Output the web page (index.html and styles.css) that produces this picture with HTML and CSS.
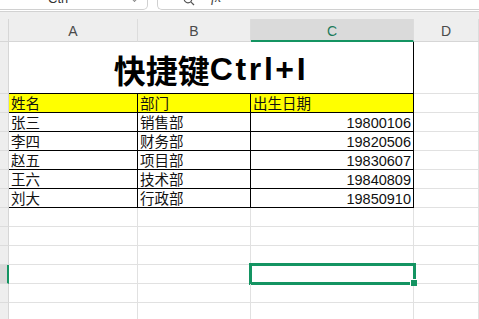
FILE: index.html
```html
<!doctype html>
<html lang="zh-CN">
  <head>
    <meta charset="UTF-8" />
    <meta name="viewport" content="width=device-width, initial-scale=1.0" />
    <title>快捷键Ctrl+I</title>
    <link rel="stylesheet" href="styles.css">
  </head>
  <body>
    <div class="topbar">
      <div class="namebox">
        <span class="name">Ctrl</span>
        <span class="caret"></span>
      </div>
      <div class="formulabox">
        <svg class="search" width="12" height="12" viewBox="0 0 12 12">
          <circle cx="5" cy="5" r="3.8" fill="none" stroke="#555" stroke-width="1.2" />
          <path d="M7.8 7.8 L11 11" stroke="#555" stroke-width="1.2" />
        </svg>
        <span class="fx">fx</span>
      </div>
    </div>
    <div class="band"></div>

    <div class="sheet">
      <!-- column headers -->
      <div class="corner"></div>
      <div class="colhead">A</div>
      <div class="colhead">B</div>
      <div class="colhead active">C</div>
      <div class="colhead">D</div>

      <!-- title row, A:C merged -->
      <div class="rowhead"></div>
      <div class="title">快捷键<span class="latin">Ctrl+I</span></div>
      <div class="cell"></div>

      <div class="rowhead"></div>
      <div class="cell b yellow">姓名</div>
      <div class="cell b yellow">部门</div>
      <div class="cell b yellow">出生日期</div>
      <div class="cell"></div>

      <div class="rowhead"></div>
      <div class="cell b">张三</div>
      <div class="cell b">销售部</div>
      <div class="cell b num">19800106</div>
      <div class="cell"></div>

      <div class="rowhead"></div>
      <div class="cell b">李四</div>
      <div class="cell b">财务部</div>
      <div class="cell b num">19820506</div>
      <div class="cell"></div>

      <div class="rowhead"></div>
      <div class="cell b">赵五</div>
      <div class="cell b">项目部</div>
      <div class="cell b num">19830607</div>
      <div class="cell"></div>

      <div class="rowhead"></div>
      <div class="cell b">王六</div>
      <div class="cell b">技术部</div>
      <div class="cell b num">19840809</div>
      <div class="cell"></div>

      <div class="rowhead"></div>
      <div class="cell b">刘大</div>
      <div class="cell b">行政部</div>
      <div class="cell b num">19850910</div>
      <div class="cell"></div>

      <div class="rowhead"></div>
      <div class="cell"></div>
      <div class="cell"></div>
      <div class="cell"></div>
      <div class="cell"></div>

      <div class="rowhead"></div>
      <div class="cell"></div>
      <div class="cell"></div>
      <div class="cell"></div>
      <div class="cell"></div>

      <div class="rowhead"></div>
      <div class="cell"></div>
      <div class="cell"></div>
      <div class="cell"></div>
      <div class="cell"></div>

      <div class="rowhead active"></div>
      <div class="cell"></div>
      <div class="cell"></div>
      <div class="cell selected"><span class="handle"></span></div>
      <div class="cell"></div>

      <div class="rowhead"></div>
      <div class="cell"></div>
      <div class="cell"></div>
      <div class="cell"></div>
      <div class="cell"></div>

      <div class="rowhead"></div>
      <div class="cell"></div>
      <div class="cell"></div>
      <div class="cell"></div>
      <div class="cell"></div>
    </div>
  </body>
</html>
```

FILE: styles.css
```css
* {
  box-sizing: border-box;
}

body {
  margin: 0;
  background-color: #fff;
  font-family: "Liberation Sans", "Noto Sans CJK SC", sans-serif;
  overflow: hidden;
}

/* formula bar, scrolled mostly out of view */
.topbar {
  display: flex;
  height: 12px;
  overflow: hidden;
  border-bottom: 1px solid #d2d2d2;
}

.namebox {
  display: flex;
  align-items: center;
  width: 148px;
  height: 24px;
  margin-top: -14px;
  padding-left: 48px;
  border: 1px solid #d0d0d0;
  border-left: none;
  border-radius: 0 0 5px 0;
  font-size: 13px;
  color: #333;
}

.caret {
  margin-left: auto;
  margin-right: 10px;
  width: 5px;
  height: 5px;
  border-right: 1px solid #888;
  border-bottom: 1px solid #888;
  transform: rotate(45deg);
}

.formulabox {
  display: flex;
  align-items: center;
  gap: 16px;
  flex: 1;
  height: 24px;
  margin-top: -14px;
  margin-left: 9px;
  padding-left: 25px;
  border: 1px solid #d0d0d0;
  border-right: none;
  border-radius: 0 0 0 5px;
}

.search {
  margin-top: 4px;
}

.fx {
  font-family: "Liberation Serif", serif;
  font-style: italic;
  font-size: 14px;
  color: #444;
}

.band {
  height: 7px;
  background-color: #eeeeee;
}

/* worksheet grid */
.sheet {
  display: grid;
  grid-template-columns: 9px 129px 113px 163px 1fr;
  grid-template-rows: 23px 52px;
  grid-auto-rows: 19px;
}

.corner,
.colhead,
.rowhead {
  background-color: #eeeeee;
}

.corner {
  border-right: 1px solid #d6d6d6;
  border-bottom: 1px solid #d6d6d6;
}

.colhead {
  display: flex;
  justify-content: center;
  align-items: center;
  padding-top: 2px;
  border-right: 1px solid #dcdcdc;
  border-bottom: 1px solid #d6d6d6;
  font-size: 14px;
  color: #4a4a4a;
}

.colhead.active {
  background-color: #dadada;
  border-bottom: 2px solid #149462;
  color: #1d7a5a;
}

.rowhead {
  border-right: 1px solid #d6d6d6;
  border-bottom: 1px solid #dcdcdc;
}

.rowhead.active {
  background-color: #d9d9d9;
  border-right: 2px solid #149462;
}

.cell {
  position: relative;
  display: flex;
  align-items: center;
  padding: 1px 2px 0;
  border-right: 1px solid #e1e1e1;
  border-bottom: 1px solid #e1e1e1;
  font-size: 14.5px;
  line-height: 18px;
  color: #111;
  white-space: nowrap;
}

.cell.b {
  border-right-color: #000;
  border-bottom-color: #000;
}

.cell.yellow {
  background-color: #ffff00;
}

.cell.num {
  justify-content: flex-end;
}

.title {
  grid-column: span 3;
  display: flex;
  justify-content: center;
  align-items: center;
  padding-top: 3px;
  border-right: 1px solid #000;
  border-bottom: 1px solid #000;
  font-family: "Noto Sans CJK SC", sans-serif;
  font-weight: 700;
  font-size: 32px;
  color: #000;
}

.title .latin {
  font-family: "Liberation Sans", sans-serif;
  letter-spacing: 2.6px;
}

/* active cell outline with fill handle */
.cell.selected::before {
  content: "";
  position: absolute;
  top: -2px;
  left: -2px;
  right: -3px;
  bottom: -2px;
  border: 3px solid #149462;
}

.handle {
  position: absolute;
  right: -4px;
  bottom: -3px;
  width: 7px;
  height: 7px;
  background-color: #149462;
  border-left: 1px solid #fff;
  border-top: 1px solid #fff;
  z-index: 1;
}
```
